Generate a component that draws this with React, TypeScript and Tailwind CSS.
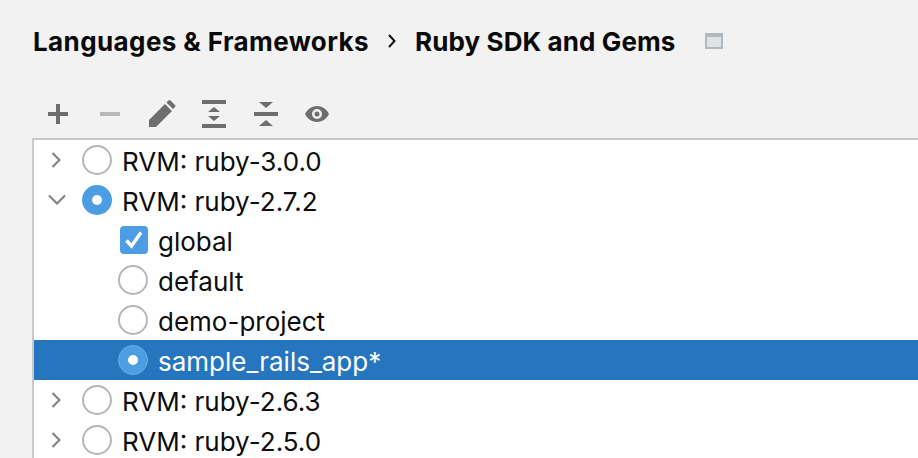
import React from 'react';

const Chevron = ({ open }: { open: boolean }) => (
    <svg width="18" height="16" viewBox="0 0 18 16" fill="none" stroke="#808080" strokeWidth="2">
        <path d={open ? 'M1 3.500l8 8 8-8' : 'M4.500 1l7 7-7 7'} />
    </svg>
);

const Radio = ({ checked, selected }: { checked?: boolean; selected?: boolean }) => {
    if (checked) {
        return (
            <div className={`w-[30px] h-[30px] rounded-full flex items-center justify-center bg-[#4c9de4] ${selected ? 'border border-[#6aaee8]' : ''}`}>
                <div className="w-[10px] h-[10px] rounded-full bg-white" />
            </div>
        );
    }
    return <div className="w-[30px] h-[30px] rounded-full bg-white border-2 border-[#b6b6b6]" />;
};

const Check = () => (
    <div className="ml-[2px] w-[28px] h-[28px] rounded-[4px] bg-[#4c9de4] flex items-center justify-center">
        <svg width="20" height="20" viewBox="0 0 20 20" fill="none" stroke="#fff" strokeWidth="3.500">
            <path d="M2.500 10.500l5 5.500 9.500-13.500" />
        </svg>
    </div>
);

const RootRow = ({ label, open, checked }: { label: string; open?: boolean; checked?: boolean }) => (
    <div className="h-10 flex items-center pl-[14px]">
        <div className="w-[18px] flex justify-center"><Chevron open={!!open} /></div>
        <div className="ml-[16px]"><Radio checked={checked} /></div>
        <span className="ml-[10px] pt-[2px] text-[26px] text-[#0d0d0d] whitespace-nowrap">{label}</span>
    </div>
);

const ChildRow = ({ label, selected, icon }: { label: string; selected?: boolean; icon: React.ReactNode }) => (
    <div className={`h-10 flex items-center pl-[84px] ${selected ? 'bg-[#2675bf]' : ''}`}>
        <div className="w-[30px] flex justify-center">{icon}</div>
        <span className={`ml-[10px] pt-[2px] text-[26px] whitespace-nowrap ${selected ? 'text-white' : 'text-[#0d0d0d]'}`}>{label}</span>
    </div>
);

const Toolbar = () => (
    <div className="mt-[15px] h-[34px] flex items-center pl-[46px]">
        {/* add */}
        <svg width="24" height="24" viewBox="0 0 24 24" fill="#6e6e6e"><path d="M10 2h4v8h8v4h-8v8h-4v-8H2v-4h8z" /></svg>
        {/* remove */}
        <svg className="ml-[28px]" width="24" height="24" viewBox="0 0 24 24" fill="#b8b8b8"><path d="M2 10h20v4H2z" /></svg>
        {/* edit */}
        <svg className="ml-[26px]" width="28" height="28" viewBox="0 0 28 28" fill="#6e6e6e"><path d="M1 27v-7L17 4l7 7L8 27zM18.500 2.500l2-2a1.500 1.500 0 0 1 2 0l4.500 4.500a1.500 1.500 0 0 1 0 2l-2 2z" /></svg>
        {/* expand all */}
        <svg className="ml-[26px]" width="24" height="28" viewBox="0 0 24 28" fill="#6e6e6e"><path d="M0 0h24v4H0zM0 24h24v4H0zM12 7l6 5H6zM6 16h12l-6 5z" /></svg>
        {/* collapse all */}
        <svg className="ml-[28px]" width="24" height="28" viewBox="0 0 24 28" fill="#6e6e6e"><path d="M5 2h14l-7 6zM0 12h24v4H0zM12 20l7 6H5z" /></svg>
        {/* show */}
        <svg className="ml-[27px]" width="24" height="16" viewBox="0 0 24 16" fill="#6e6e6e">
            <path fillRule="evenodd" d="M12 0c6 0 10 4 12 8-2 4-6 8-12 8S2 12 0 8c2-4 6-8 12-8zm0 3a5 5 0 1 0 0 10 5 5 0 0 0 0-10zm0 2.500a2.500 2.500 0 1 1 0 5 2.500 2.500 0 0 1 0-5z" />
        </svg>
    </div>
);

const App = () => {
    return (
        <div className="w-[918px] h-[458px] overflow-hidden bg-[#f2f2f2] font-['Inter',sans-serif]">
            {/* Breadcrumb */}
            <div className="h-[82px] flex items-center pl-[33px]">
                <span className="text-[26px] tracking-[0.4px] font-bold text-[#0a0a0a] whitespace-nowrap">Languages &amp; Frameworks</span>
                <svg className="ml-[18px]" width="12" height="14" viewBox="0 0 12 14" fill="none" stroke="#111" strokeWidth="2">
                    <path d="M2 1l5.500 6-5.500 6" />
                </svg>
                <span className="ml-[16px] text-[26px] tracking-[0.1px] font-bold text-[#0a0a0a] whitespace-nowrap">Ruby SDK and Gems</span>
                <div className="ml-[29px] w-[18px] h-[16px] bg-[#dfe3e6] border-2 border-t-[4px] border-[#aeb9c0]" />
            </div>
            <Toolbar />
            {/* Tree */}
            <div className="mt-[7px] ml-[32px] border-t-2 border-l-2 border-[#c9c9c9] bg-white">
                <RootRow label="RVM: ruby-3.0.0" />
                <RootRow label="RVM: ruby-2.7.2" open checked />
                <ChildRow label="global" icon={<Check />} />
                <ChildRow label="default" icon={<Radio />} />
                <ChildRow label="demo-project" icon={<Radio />} />
                <ChildRow label="sample_rails_app*" selected icon={<Radio checked selected />} />
                <RootRow label="RVM: ruby-2.6.3" />
                <RootRow label="RVM: ruby-2.5.0" />
            </div>
        </div>
    );
};

export default App;
